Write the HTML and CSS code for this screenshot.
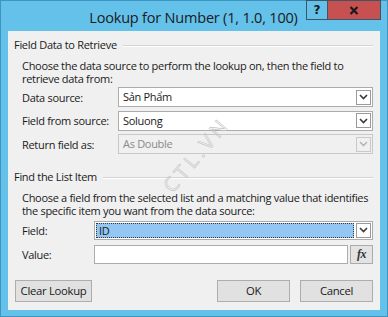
FILE: index.html
```html
<!DOCTYPE html>
<html>
<head>
<meta charset="utf-8">
<link rel="stylesheet" href="styles.css">
</head>
<body>
<div class="window">
  <div class="titlebar">
    <div class="title">Lookup for Number (1, 1.0, 100)</div>
    <div class="controls">
      <div class="ctl help">?</div>
      <div class="ctl close">
        <svg width="10" height="9" viewBox="0 0 10 9"><path d="M1.5 1 L8.5 8 M8.5 1 L1.5 8" stroke="#1a1a1a" stroke-width="2.2" fill="none"/></svg>
      </div>
    </div>
  </div>
  <div class="client">
    <div class="group-head"><span>Field Data to Retrieve</span><div class="rule"></div></div>
    <div class="desc">Choose the data source to perform the lookup on, then the field to<br>retrieve data from:</div>
    <div class="rows rows1">
      <div class="row">
        <div class="label l1">Data source:</div>
        <div class="combo"><div class="ctext">Sản Phẩm</div><div class="arrow"><svg width="9" height="6" viewBox="0 0 9 6"><path d="M1 1 L4.5 4.5 L8 1" stroke="#3a3a3a" stroke-width="1.6" fill="none"/></svg></div></div>
      </div>
      <div class="row">
        <div class="label l1">Field from source:</div>
        <div class="combo"><div class="ctext">Soluong</div><div class="arrow"><svg width="9" height="6" viewBox="0 0 9 6"><path d="M1 1 L4.5 4.5 L8 1" stroke="#3a3a3a" stroke-width="1.6" fill="none"/></svg></div></div>
      </div>
      <div class="row">
        <div class="label l1">Return field as:</div>
        <div class="combo disabled"><div class="ctext">As Double</div><div class="arrow"><svg width="9" height="6" viewBox="0 0 9 6"><path d="M1 1 L4.5 4.5 L8 1" stroke="#b0b0b0" stroke-width="1.4" fill="none"/></svg></div></div>
      </div>
    </div>
    <div class="group-head g2"><span>Find the List Item</span><div class="rule"></div></div>
    <div class="desc">Choose a field from the selected list and a matching value that identifies<br>the specific item you want from the data source:</div>
    <div class="rows rows2">
      <div class="row">
        <div class="label l2">Field:</div>
        <div class="combo selected"><div class="ctext"><span class="focus">ID</span></div><div class="arrow"><svg width="9" height="6" viewBox="0 0 9 6"><path d="M1 1 L4.5 4.5 L8 1" stroke="#3a3a3a" stroke-width="1.6" fill="none"/></svg></div></div>
      </div>
      <div class="row">
        <div class="label l2">Value:</div>
        <div class="textbox"></div>
        <div class="fx">fx</div>
      </div>
    </div>
    <div class="buttons">
      <div class="btn clear">Clear Lookup</div>
      <div class="spacer"></div>
      <div class="btn ok">OK</div>
      <div class="btn cancel">Cancel</div>
    </div>
    <div class="watermark">CTL.VN</div>
  </div>
</div>
</body>
</html>
```
FILE: styles.css
```css
html, body { margin: 0; padding: 0; }
body { width: 388px; height: 317px; overflow: hidden; font-family: "Open Sans", "Noto Sans", sans-serif; }
.window {
  width: 388px; height: 317px; box-sizing: border-box;
  background: #63c1ea;
  border: 1px solid #3f93bf;
  display: flex; flex-direction: column;
}
.titlebar { height: 30px; display: flex; align-items: flex-start; }
.title {
  flex: 1; padding-left: 80px; text-align: center;
  font-size: 14.5px; color: #1b1b1b; line-height: 30px; padding-top: 2px;
  letter-spacing: -0.2px;
}
.controls { display: flex; margin-right: 6px; margin-top: -1px; }
.ctl { height: 20px; display: flex; align-items: center; justify-content: center; box-sizing: border-box; border: 1px solid #3e5563; }
.help { width: 21px; background: #63c1ea; font-weight: bold; font-size: 12px; color: #1a1a1a; font-family: "DejaVu Sans", sans-serif; border-right: none; }
.close { width: 54px; background: #c75050; }
.client {
  flex: 1; margin: 0 7px 6px; background: #f0f0f0; position: relative;
  font-size: 11px; letter-spacing: -0.3px; color: #1a1a1a;
  padding: 6px 7px 0 6px;
  display: flex; flex-direction: column;
}
.group-head { display: flex; align-items: center; height: 16px; line-height: 16px; white-space: nowrap; }
.group-head span { padding-right: 6px; }
.rule { flex: 1; border-top: 1px solid #d5d5d5; border-bottom: 1px solid #ffffff; margin-top: 1px; }
.g2 { margin-top: 15px; }
.desc { margin-top: 6px; padding-left: 8px; line-height: 13px; white-space: nowrap; }
.rows { display: flex; flex-direction: column; }
.rows1 { margin-top: 2px; gap: 3.5px; }
.rows2 { margin-top: 3px; gap: 4px; }
.row { display: flex; align-items: center; height: 20px; white-space: nowrap; }
.label { padding-left: 8px; box-sizing: border-box; }
.l1 { width: 104px; }
.l2 { width: 80px; }
.combo {
  flex: 1; height: 20px; box-sizing: border-box; border: 1px solid #acacac; background: #fff;
  display: flex; align-items: center; padding: 1px;
}
.ctext { flex: 1; padding-left: 3px; line-height: 16px; height: 16px; }
.arrow {
  width: 15px; height: 15px; box-sizing: border-box; border: 1px solid #9a9a9a; background: #fff;
  display: flex; align-items: center; justify-content: center; margin-left: 2px;
}
.combo.disabled { background: #f0f0f0; border-color: #c8c8c8; color: #8a8a8a; }
.combo.disabled .arrow { background: #f0f0f0; border-color: #c9c9c9; }
.combo.selected { height: 19px; padding: 1px; }
.combo.selected .ctext { background: #93c6f2; padding-left: 0; height: 15px; line-height: 14px; box-sizing: border-box; border: 1px dotted #3a3a3a; }
.combo.selected .focus { padding-left: 2px; }
.combo.selected .arrow { height: 15px; }
.textbox { flex: 1; height: 19px; box-sizing: border-box; border: 1px solid #acacac; background: #fff; }
.fx {
  width: 23px; height: 19px; margin-left: 2px; box-sizing: border-box; border: 1px solid #acacac; background: #e3e3e3;
  font-family: "Liberation Serif", serif; font-style: italic; font-weight: bold; font-size: 12px; color: #333;
  display: flex; align-items: center; justify-content: center; letter-spacing: -0.5px;
}
.buttons { display: flex; margin-top: 16px; padding-left: 1px; }
.spacer { flex: 1; }
.btn {
  height: 22px; box-sizing: border-box; border: 1px solid #adadad; background: #e1e1e1;
  display: flex; align-items: center; justify-content: center; line-height: 16px; font-size: 11.3px;
}
.clear { width: 77px; }
.ok { width: 73px; }
.cancel { width: 73px; margin-left: 10px; }
.watermark {
  position: absolute; left: 143px; top: 110px;
  font-size: 20px; color: transparent; -webkit-text-stroke: 0.6px #c4c4c4;
  letter-spacing: 4px; transform: rotate(-50deg); transform-origin: center;
}
```
